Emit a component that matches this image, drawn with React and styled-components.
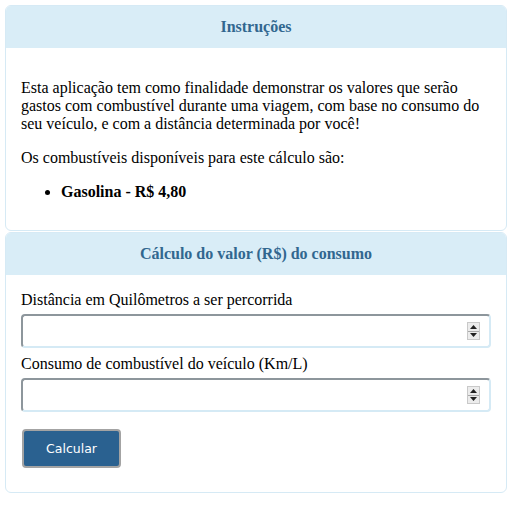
import React from "react";
import styled, { createGlobalStyle } from "styled-components";

const Global = createGlobalStyle`
  html, body { margin: 0; padding: 0; background: #fff; }
  body { font-family: "Liberation Serif", "Times New Roman", serif; font-size: 16px; color: #000; }
`;

const Page = styled.div`
  padding: 5px 11px 0 5px;
  display: flex;
  flex-direction: column;
  gap: 1px;
`;

const Panel = styled.section`
  border: 1px solid #d6eaf5;
  border-radius: 6px;
  overflow: hidden;
  background: #fff;
`;

const Header = styled.header`
  background: #d9edf7;
  height: 42px;
  display: flex;
  align-items: center;
  justify-content: center;
  color: #31678f;
  font-weight: bold;
  font-size: 16px;
`;

const Body = styled.div`
  padding: ${(p) => p.$pad};
`;

const Para = styled.p`
  margin: 0 0 16px;
  line-height: 18px;
`;

const List = styled.ul`
  margin: 0;
  padding-left: 40px;
  line-height: 18px;
  font-weight: bold;
`;

const Label = styled.label`
  display: block;
  line-height: 18px;
  margin-bottom: 5px;
`;

const Field = styled.div`
  position: relative;
  margin-bottom: ${(p) => p.$mb}px;
`;

const Input = styled.input`
  display: block;
  box-sizing: border-box;
  width: 100%;
  height: 34px;
  border-style: solid;
  border-width: 2px;
  border-color: #8d969c #d5eaf5 #d5eaf5 #8d969c;
  border-radius: 4px;
  background: #fff;
  outline: none;
  font: inherit;
  padding: 0 8px;
`;

const Spinner = styled.div`
  position: absolute;
  right: 11px;
  top: 8px;
  width: 13px;
  height: 18px;
  display: flex;
  flex-direction: column;
  border: 1px solid #c9c9c9;
  box-sizing: border-box;
  background: #ececec;
`;

const SpinHalf = styled.div`
  flex: 1;
  display: flex;
  align-items: center;
  justify-content: center;
  & + & { border-top: 1px solid #a9a9a9; }
`;

const Button = styled.button`
  box-sizing: border-box;
  width: 99px;
  height: 39px;
  margin-left: 1px;
  background: #2a6190;
  color: #fff;
  border: 2px solid #a3a3a3;
  border-radius: 4px;
  font-family: "DejaVu Sans", Tahoma, sans-serif;
  font-size: 12.5px;
`;

const Tri = ({ up }) => (
  <svg width="7" height="4" viewBox="0 0 7 4">
    <polygon points={up ? "3.5,0 7,4 0,4" : "0,0 7,0 3.5,4"} fill="#222" />
  </svg>
);

const NumberField = ({ label, mb }) => (
  <>
    <Label>{label}</Label>
    <Field $mb={mb}>
      <Input type="text" />
      <Spinner>
        <SpinHalf><Tri up /></SpinHalf>
        <SpinHalf><Tri /></SpinHalf>
      </Spinner>
    </Field>
  </>
);

export default function App() {
  return (
    <>
      <Global />
      <Page>
        <Panel>
          <Header>Instruções</Header>
          <Body $pad="31px 15px 29px">
            <Para>
              Esta aplicação tem como finalidade demonstrar os valores que serão
              gastos com combustível durante uma viagem, com base no consumo do
              seu veículo, e com a distância determinada por você!
            </Para>
            <Para>Os combustíveis disponíveis para este cálculo são:</Para>
            <List>
              <li>Gasolina - R$ 4,80</li>
            </List>
          </Body>
        </Panel>
        <Panel>
          <Header>Cálculo do valor (R$) do consumo</Header>
          <Body $pad="16px 15px 24px">
            <NumberField label="Distância em Quilômetros a ser percorrida" mb={7} />
            <NumberField label="Consumo de combustível do veículo (Km/L)" mb={17} />
            <Button>Calcular</Button>
          </Body>
        </Panel>
      </Page>
    </>
  );
}
